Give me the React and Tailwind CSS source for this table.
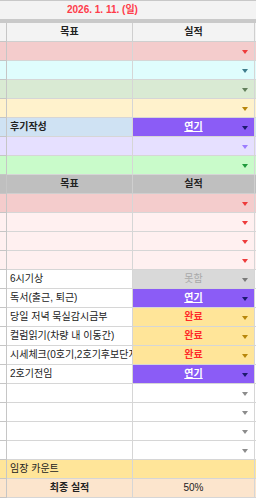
import React from "react";

const FONT = { fontFamily: '"Liberation Sans", "Noto Sans CJK KR", sans-serif' };

// one row of the sheet: row bg, label, status cell
const rows = [
  { bg: "bg-[#f4cccc]", arrow: "border-t-[#ee3b3b]" },
  { bg: "bg-[#dffdfd]", arrow: "border-t-[#3f7c8c]" },
  { bg: "bg-[#d9ead3]", arrow: "border-t-[#62805c]" },
  { bg: "bg-[#fff2cc]", arrow: "border-t-[#b8860b]" },
  { bg: "bg-[#cfe2f3]", label: "후기작성", bold: true, status: "연기" },
  { bg: "bg-[#e6e0ff]", arrow: "border-t-[#9c7cff]" },
  { bg: "bg-[#c9fbca]", arrow: "border-t-[#1f9a3c]" },
  { header: true },
  { bg: "bg-[#f4cccc]", arrow: "border-t-[#ee3b3b]" },
  { bg: "bg-[#fff0f0]", arrow: "border-t-[#ee3b3b]" },
  { bg: "bg-[#fff0f0]", arrow: "border-t-[#ee3b3b]" },
  { bg: "bg-[#fff0f0]", arrow: "border-t-[#ee3b3b]" },
  { bg: "bg-white", label: "6시기상", status: "못함" },
  { bg: "bg-white", label: "독서(출근, 퇴근)", status: "연기" },
  { bg: "bg-white", label: "당일 저녁 묵실감시금부", status: "완료" },
  { bg: "bg-white", label: "컬럼읽기(차량 내 이동간)", status: "완료" },
  { bg: "bg-white", label: "시세체크(0호기,2호기후보단지체크)", status: "완료" },
  { bg: "bg-white", label: "2호기전임", status: "연기" },
  { bg: "bg-white", arrow: "border-t-[#8c8c8c]" },
  { bg: "bg-white", arrow: "border-t-[#8c8c8c]" },
  { bg: "bg-white", arrow: "border-t-[#8c8c8c]" },
  { bg: "bg-white", arrow: "border-t-[#8c8c8c]" },
];

const statusStyle = {
  연기: { cell: "bg-[#8b5cf6]", text: "text-white font-bold underline", arrow: "border-t-[#1c1a6e]" },
  완료: { cell: "bg-[#ffe599]", text: "text-[#ff2a2a] font-bold", arrow: "border-t-[#b8860b]" },
  못함: { cell: "bg-[#d9d9d9]", text: "text-[#a9a9a9]", arrow: "border-t-[#7a7a7a]" },
};

function Arrow({ color }) {
  return (
    <span
      className={`absolute right-[6px] top-[8px] w-0 h-0 border-l-[3px] border-r-[3px] border-t-[4px] border-l-transparent border-r-transparent ${color}`}
    />
  );
}

function HeaderRow({ bg }) {
  return (
    <div className={`flex h-[19px] ${bg} font-bold text-[#222]`}>
      <div className="w-[7px] border-r border-b border-[#c6c6c6]" />
      <div className="w-[126px] border-r border-b border-[#cfcfcf] flex items-center justify-center">목표</div>
      <div className="w-[122px] border-r border-b border-[#cfcfcf] flex items-center justify-center">실적</div>
      <div className="w-[1px] border-b border-[#cfcfcf]" />
    </div>
  );
}

function Row({ row }) {
  const s = row.status ? statusStyle[row.status] : null;
  return (
    <div className={`flex h-[19px] ${row.bg}`}>
      <div className="w-[7px] border-r border-b border-[#c6c6c6]" />
      <div
        className={`w-[126px] border-r border-b border-[#d6d6d6] flex items-center pl-[3px] overflow-hidden whitespace-nowrap text-[#222] ${row.bold ? "font-bold" : ""}`}
      >
        {row.label}
      </div>
      <div className={`relative w-[122px] border-r border-b border-[#d6d6d6] flex items-center justify-center ${s ? s.cell : ""}`}>
        {s && <span className={s.text}>{row.status}</span>}
        <Arrow color={s ? s.arrow : row.arrow} />
      </div>
      <div className="w-[1px] border-b border-[#d6d6d6]" />
    </div>
  );
}

export default function App() {
  return (
    <div className="w-[256px] h-[499px] bg-white text-[10px] leading-none overflow-hidden" style={FONT}>
      {/* date row + frozen divider */}
      <div className="h-[19px] bg-[#f3f3f3] border-t border-[#c8c8c8] flex items-center pl-[67px]">
        <span className="font-bold text-[#ff3b4a]">2026. 1. 11. (일)</span>
      </div>
      <div className="h-[4px] bg-[#c9c9c9]" />

      <HeaderRow bg="bg-[#f3f3f3]" />
      {rows.map((row, i) =>
        row.header ? <HeaderRow key={i} bg="bg-[#bfbfbf]" /> : <Row key={i} row={row} />
      )}

      {/* totals */}
      <div className="flex h-[19px] bg-[#ffe599] text-[#222]">
        <div className="w-[7px] border-r border-b border-[#c6c6c6]" />
        <div className="w-[126px] border-r border-b border-[#d6d6d6] flex items-center pl-[3px]">임장 카운트</div>
        <div className="w-[122px] border-r border-b border-[#d6d6d6]" />
        <div className="w-[1px] border-b border-[#d6d6d6]" />
      </div>
      <div className="flex h-[19px] bg-[#fce5cd] text-[#222]">
        <div className="w-[7px] border-r border-b border-[#c6c6c6]" />
        <div className="w-[126px] border-r border-b border-[#d6d6d6] flex items-center justify-center font-bold">최종 실적</div>
        <div className="w-[122px] border-r border-b border-[#d6d6d6] flex items-center justify-center">50%</div>
        <div className="w-[1px] border-b border-[#d6d6d6]" />
      </div>
    </div>
  );
}
